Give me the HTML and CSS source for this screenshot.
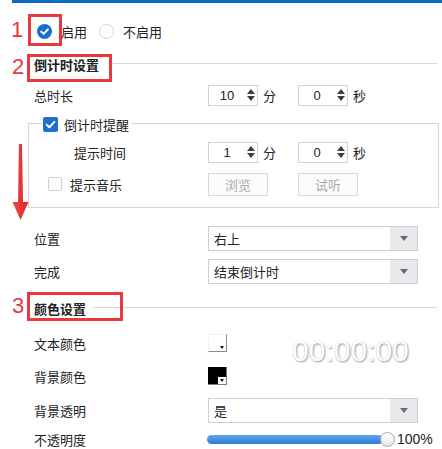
FILE: index.html
```html
<!DOCTYPE html>
<html lang="zh-CN">
<head>
<meta charset="utf-8">
<title>倒计时设置</title>
<link rel="stylesheet" href="styles.css">
</head>
<body>
<div class="page">
  <div class="topbar"></div>
  <div class="content">
    <div class="row enable">
      <span class="radio checked"><svg width="15" height="15" viewBox="0 0 15 15"><circle cx="7.5" cy="7.5" r="7.5" fill="#1a6dcc"/><path d="M4.2 7.6 L6.6 9.9 L10.9 5.4" stroke="#fff" stroke-width="2" fill="none" stroke-linecap="round" stroke-linejoin="round"/></svg></span>
      <span class="opt">启用</span>
      <span class="radio"></span>
      <span class="opt">不启用</span>
    </div>

    <div class="section-title"><span>倒计时设置</span><i class="rule"></i></div>

    <div class="row field">
      <span class="label">总时长</span>
      <span class="spin"><span class="num">10</span><span class="arrows"><i class="up"></i><i class="down"></i></span></span>
      <span class="unit">分</span>
      <span class="spin"><span class="num">0</span><span class="arrows"><i class="up"></i><i class="down"></i></span></span>
      <span class="unit">秒</span>
    </div>

    <div class="group">
      <div class="legend">
        <span class="cb checked"><svg width="15" height="15" viewBox="0 0 15 15"><rect width="15" height="15" rx="2" fill="#1f6fd0"/><path d="M3.6 7.6 L6.3 10.2 L11.4 4.9" stroke="#fff" stroke-width="2" fill="none" stroke-linecap="round" stroke-linejoin="round"/></svg></span>
        <span class="legend-text">倒计时提醒</span>
      </div>
      <div class="row grow">
        <span class="glabel">提示时间</span>
        <span class="spin"><span class="num">1</span><span class="arrows"><i class="up"></i><i class="down"></i></span></span>
        <span class="unit">分</span>
        <span class="spin"><span class="num">0</span><span class="arrows"><i class="up"></i><i class="down"></i></span></span>
        <span class="unit">秒</span>
      </div>
      <div class="row gmusic">
        <span class="cb"></span>
        <span class="glabel2">提示音乐</span>
        <span class="btn">浏览</span>
        <span class="btn second">试听</span>
      </div>
    </div>

    <div class="row sel-row first">
      <span class="label">位置</span>
      <span class="select"><span class="val">右上</span><span class="caret"><i></i></span></span>
    </div>
    <div class="row sel-row">
      <span class="label">完成</span>
      <span class="select"><span class="val">结束倒计时</span><span class="caret"><i></i></span></span>
    </div>

    <div class="section-title s3"><span>颜色设置</span><i class="rule"></i></div>

    <div class="colors">
      <div class="colors-left">
        <div class="row crow">
          <span class="label">文本颜色</span>
          <span class="swatch white"><span class="drop"><i></i></span></span>
        </div>
        <div class="row crow second">
          <span class="label">背景颜色</span>
          <span class="swatch black"><span class="drop"><i></i></span></span>
        </div>
      </div>
      <div class="clock">00:00:00</div>
    </div>

    <div class="row sel-row trans">
      <span class="label">背景透明</span>
      <span class="select"><span class="val">是</span><span class="caret"><i></i></span></span>
    </div>

    <div class="row opacity">
      <span class="label">不透明度</span>
      <span class="slider"><span class="track"></span><span class="knob"></span></span>
      <span class="pct">100%</span>
    </div>
  </div>

  <div class="annot">
    <span class="mark-num n1">1</span>
    <span class="mark-box b1"></span>
    <span class="mark-num n2">2</span>
    <span class="mark-box b2"></span>
    <span class="mark-num n3">3</span>
    <span class="mark-box b3"></span>
    <svg class="arrow" width="17" height="77" viewBox="0 0 17 77"><defs><linearGradient id="ag" x1="0" x2="1"><stop offset="0" stop-color="#f04848"/><stop offset="1" stop-color="#d92626"/></linearGradient></defs><polygon points="7,0 10,0 11,58 16.5,58 8.5,76 0.5,58 6,58" fill="url(#ag)"/></svg>
  </div>
</div>
</body>
</html>
```

FILE: styles.css
```css
* { box-sizing: border-box; margin: 0; padding: 0; }
html, body { background: #fff; }
body {
  width: 442px;
  height: 449px;
  overflow: hidden;
  font-family: "Noto Sans CJK SC", "Microsoft YaHei", sans-serif;
  font-size: 13px;
  color: #222;
}
.page { position: relative; width: 442px; height: 449px; overflow: hidden; }
.topbar { height: 3px; margin-left: 12px; background: #0b6cc2; }
.content { padding: 0 5px 0 34px; }
.row { display: flex; align-items: center; }

.enable { margin-top: 14px; height: 28px; }
.radio {
  width: 15px; height: 15px; border-radius: 50%;
  border: 1px solid #d6d6d6; background: #fff;
  display: inline-flex;
}
.radio.checked { border: none; margin-left: 3px; }
.opt { margin-left: 9px; }
.opt + .radio { margin-left: 12px; }

.section-title { height: 38px; display: flex; align-items: center; font-weight: bold; }
.rule { flex: 1; height: 1px; background: #d9d9d9; margin-left: 9px; margin-top: -2px; }
.s3 { margin-top: 5px; }
.s3 .rule { margin-left: 7px; }

.field { height: 24px; }
.label { width: 174px; flex: none; }
.spin {
  width: 50px; height: 21px; flex: none;
  border: 1px solid #d2d2d2; background: #fff;
  display: flex; align-items: center;
}
.num { width: 36px; text-align: center; font-family: "Liberation Sans", Arial, sans-serif; font-size: 13px; color: #222; }
.arrows { width: 12px; display: flex; flex-direction: column; align-items: center; gap: 2px; }
.up { display: block; width: 0; height: 0; border-left: 4px solid transparent; border-right: 4px solid transparent; border-bottom: 5px solid #3c3c3c; }
.down { display: block; width: 0; height: 0; border-left: 4px solid transparent; border-right: 4px solid transparent; border-top: 5px solid #3c3c3c; }
.unit { width: 40px; padding-left: 5px; flex: none; }

.group {
  margin: 16px -2px 0 -6px;
  border: 1px solid #d6d6d6;
  padding-bottom: 11px;
}
.legend {
  display: flex; align-items: center;
  width: max-content; height: 16px;
  margin-top: -8px; margin-left: 13px;
  padding: 0 3px 0 1px;
  background: #fff;
}
.cb { width: 15px; height: 15px; flex: none; display: inline-flex; border-radius: 2px; }
.gmusic .cb { border: 1px solid #cfcfcf; background: #fff; width: 14px; height: 14px; margin-left: 19px; }
.legend-text { margin-left: 6px; }
.grow { margin-top: 8px; height: 24px; }
.glabel { margin-left: 45px; width: 134px; flex: none; }
.gmusic { margin-top: 8px; height: 24px; }
.glabel2 { margin-left: 8px; width: 138px; flex: none; }
.btn {
  width: 60px; height: 23px; flex: none;
  border: 1px solid #dadada; background: #fbfbfb;
  color: #ababab; display: flex; align-items: center; justify-content: center;
}
.btn.second { margin-left: 30px; }

.sel-row { height: 25px; margin-top: 8px; }
.sel-row.first { margin-top: 18px; }
.select {
  width: 210px; height: 25px; flex: none;
  border: 1px solid #cfcfcf; background: #fff;
  display: flex;
}
.select .val { flex: 1; padding-left: 5px; display: flex; align-items: center; }
.caret { width: 27px; background: #e7e9ec; display: flex; align-items: center; justify-content: center; }
.caret i { display: block; width: 0; height: 0; border-left: 4px solid transparent; border-right: 4px solid transparent; border-top: 5px solid #6a6a6a; }

.colors { display: flex; margin-top: 4px; }
.colors-left { width: 258px; flex: none; }
.crow { height: 24px; }
.crow.second { margin-top: 9px; }
.swatch {
  position: relative; width: 19px; height: 18px; flex: none;
  border-right: 1px solid #8c8c8c; border-bottom: 1px solid #8c8c8c;
}
.swatch.white { background: #fff; border-top: 1px solid #f2f2f2; border-left: 1px solid #f2f2f2; }
.swatch.black { background: #000; border-right-color: #7a7a7a; border-bottom-color: #7a7a7a; }
.drop {
  position: absolute; right: 0; bottom: 0; width: 8px; height: 7px;
  background: #fff; display: flex; align-items: center; justify-content: center;
}
.drop i { display: block; width: 0; height: 0; border-left: 2.5px solid transparent; border-right: 2.5px solid transparent; border-top: 3px solid #111; }
.clock {
  margin-top: 5px;
  font-family: "Liberation Sans", Arial, sans-serif;
  font-size: 30px; line-height: 30px;
  color: #fdfdfd;
  text-shadow: 1px 1px 2px rgba(0, 0, 0, 0.4), -0.5px -0.5px 0.5px rgba(0, 0, 0, 0.15);
}

.trans { margin-top: 10px; }
.opacity { margin-top: 9px; height: 15px; line-height: 15px; }
.slider { position: relative; width: 188px; height: 15px; flex: none; margin-left: -1px; display: flex; align-items: center; }
.track { width: 176px; height: 9px; border-radius: 5px; background: linear-gradient(#5ea8ee, #2c7bd4); }
.knob {
  position: absolute; left: 173px; top: 0; width: 15px; height: 15px; border-radius: 50%;
  background: linear-gradient(#ffffff, #e6e6e6); border: 1px solid #a9a9a9;
}
.pct { margin-left: 2px; font-family: "Liberation Sans", Arial, sans-serif; font-size: 14px; }

.annot { position: absolute; left: 0; top: 0; width: 442px; height: 449px; pointer-events: none; }
.mark-num { position: absolute; font-family: "Liberation Sans", Arial, sans-serif; font-size: 22px; line-height: 22px; color: #e5393b; }
.n1 { left: 11px; top: 19px; }
.n2 { left: 12px; top: 56px; }
.n3 { left: 12px; top: 295px; }
.mark-box { position: absolute; border: 3px solid #e8393e; }
.b1 { left: 28px; top: 14px; width: 34px; height: 32px; }
.b2 { left: 27px; top: 54px; width: 85px; height: 28px; }
.b3 { left: 27px; top: 292px; width: 96px; height: 29px; }
.arrow { position: absolute; left: 12px; top: 144px; }
```
